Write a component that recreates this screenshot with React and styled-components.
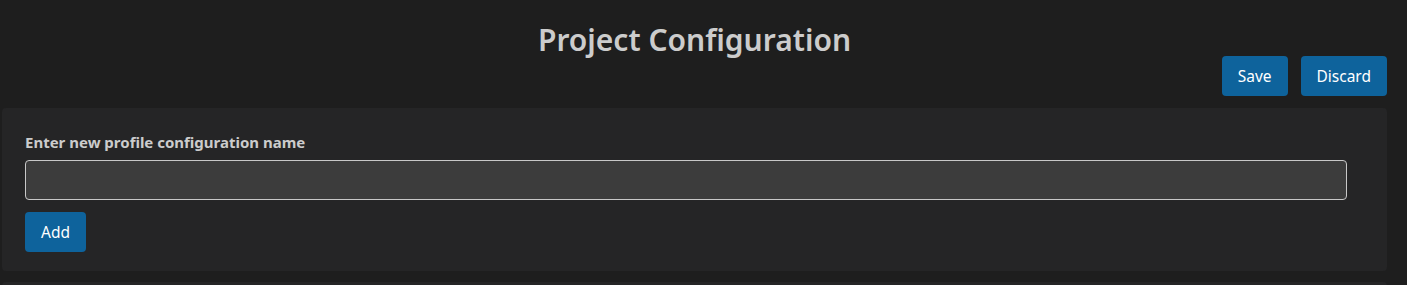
import styled, { createGlobalStyle } from "styled-components";

const GlobalStyle = createGlobalStyle`
  body {
    margin: 0;
    background: #1e1e1e;
    font-family: "Noto Sans", "Open Sans", sans-serif;
    color: #cccccc;
  }
`;

const Page = styled.div`
  padding: 0 20px 0 2px;
  display: flex;
  flex-direction: column;
  gap: 11px;
`;

const Header = styled.div`
  display: flex;
  flex-direction: column;
  margin-bottom: 1px;
`;

const Title = styled.h1`
  margin: 19px 0 0;
  text-align: center;
  font-size: 30px;
  font-weight: 600;
  line-height: 42px;
  color: #cccccc;
`;

const Actions = styled.div`
  display: flex;
  justify-content: flex-end;
  gap: 13px;
  margin-top: -5px;
`;

const Button = styled.button`
  height: 40px;
  padding: 0 16px;
  border: none;
  border-radius: 4px;
  background: #0e639c;
  color: #ffffff;
  font-family: inherit;
  font-size: 15.5px;
  cursor: pointer;
`;

const Card = styled.div`
  background: #252526;
  border-radius: 4px;
  padding: 24px 40px 19px 23px;
  display: flex;
  flex-direction: column;
  align-items: flex-start;
`;

const Label = styled.label`
  font-size: 15px;
  font-weight: 700;
  color: #cccccc;
  line-height: 20px;
`;

const Input = styled.input`
  box-sizing: border-box;
  width: 100%;
  height: 40px;
  margin: 8px 0 12px;
  background: #3c3c3c;
  border: 1px solid #c8c8c8;
  border-radius: 4px;
  color: #cccccc;
  padding: 0 10px;
  font-family: inherit;
  font-size: 14px;
  outline: none;
`;

const NextCard = styled.div`
  background: #252526;
  border-radius: 4px;
  height: 40px;
`;

export default function App() {
  return (
    <>
      <GlobalStyle />
      <Page>
        <Header>
          <Title>Project Configuration</Title>
          <Actions>
            <Button>Save</Button>
            <Button>Discard</Button>
          </Actions>
        </Header>
        <Card>
          <Label htmlFor="profile-name">Enter new profile configuration name</Label>
          <Input id="profile-name" type="text" />
          <Button>Add</Button>
        </Card>
        <NextCard />
      </Page>
    </>
  );
}
